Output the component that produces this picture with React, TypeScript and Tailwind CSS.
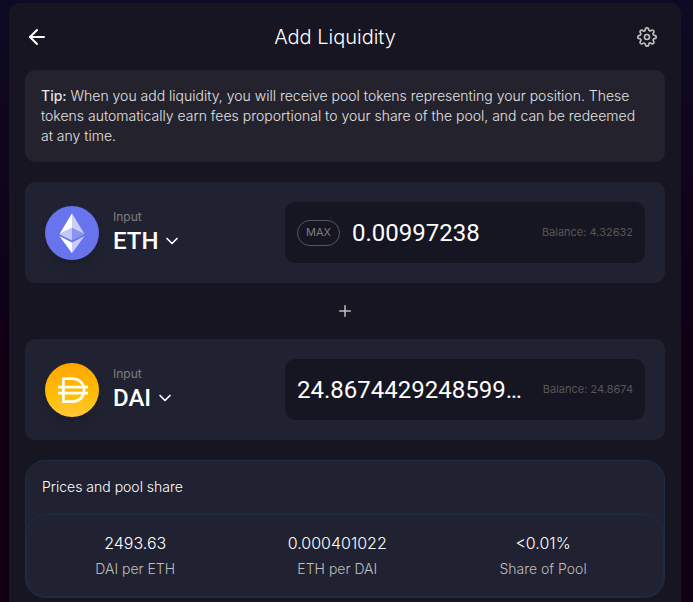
import React, { useState } from 'react';
import { FiArrowLeft, FiChevronDown, FiPlus, FiSettings } from 'react-icons/fi';

const EthLogo: React.FC = () => (
  <svg viewBox="0 0 54 54" className="w-full h-full" aria-hidden="true">
    <circle cx="27" cy="27" r="27" fill="#6873ee" />
    <path d="M27 7.2 L14.4 28.2 L27 22 Z" fill="#fff" />
    <path d="M27 7.2 L39.6 28.2 L27 22 Z" fill="#c9cdfa" />
    <path d="M14.4 28.2 L27 22 V34.6 Z" fill="#c3c7fa" />
    <path d="M39.6 28.2 L27 22 V34.6 Z" fill="#8a93f2" />
    <path d="M14.4 30 L27 36.6 V47.2 Z" fill="#fff" />
    <path d="M39.6 30 L27 36.6 V47.2 Z" fill="#c9cdfa" />
  </svg>
);

const DaiLogo: React.FC = () => (
  <svg viewBox="0 0 54 54" className="w-full h-full" aria-hidden="true">
    <defs>
      <linearGradient id="dai-fill" x1="0" y1="0" x2="0" y2="1">
        <stop offset="0" stopColor="#ffa600" />
        <stop offset="0.6" stopColor="#ffbe05" />
        <stop offset="1" stopColor="#ffc837" />
      </linearGradient>
    </defs>
    <circle cx="27" cy="27" r="27" fill="url(#dai-fill)" />
    <g fill="none" stroke="#fffdf0" strokeWidth="2.8">
      <path d="M18.4 15.7 H26.5 C34.5 15.7 39.2 20.7 39.2 27.2 C39.2 33.7 34.5 38.7 26.5 38.7 H18.4 Z" />
      <path d="M13 24.2 H43 M13 30.2 H43" />
    </g>
  </svg>
);

interface CurrencyPanelProps {
  id: string;
  symbol: string;
  logo: React.ReactNode;
  amount: string;
  balance: string;
  showMax?: boolean;
}

const CurrencyPanel: React.FC<CurrencyPanelProps> = ({ id, symbol, logo, amount, balance, showMax }) => {
  const [value, setValue] = useState(amount);

  return (
    <div className="flex items-center p-5 rounded-[10px] bg-[#202231]">
      <button type="button" className="flex items-center w-2/5 text-left">
        <span className="w-[54px] h-[54px] rounded-full shadow-lg shrink-0">{logo}</span>
        <span className="flex flex-col ml-3.5">
          <span className="text-xs font-normal text-[#7f7f7f]">Input</span>
          <span className="flex items-center text-2xl leading-8 font-medium text-white font-['Roboto',sans-serif]">
            {symbol}
            <FiChevronDown className="w-5 h-5 ml-1" />
          </span>
        </span>
      </button>
      <div className="flex items-center w-3/5 h-[61px] gap-3 px-3 rounded-[10px] bg-[#161522]">
        {showMax && (
          <button
            type="button"
            className="h-[26px] px-2 text-[11px] font-normal text-[#7f7f7f] border border-[#575757] rounded-full shrink-0"
          >
            MAX
          </button>
        )}
        <input
          id={id}
          type="text"
          inputMode="decimal"
          aria-label={`${symbol} amount`}
          value={value}
          onChange={(e) => setValue(e.target.value)}
          className="flex-1 min-w-0 text-2xl font-normal text-white bg-transparent outline-none text-ellipsis font-['Roboto',sans-serif]"
        />
        <span className="text-[11px] font-normal text-[#575757] whitespace-nowrap">Balance: {balance}</span>
      </div>
    </div>
  );
};

const App: React.FC = () => {
  const prices = [
    { value: '2493.63', label: 'DAI per ETH' },
    { value: '0.000401022', label: 'ETH per DAI' },
    { value: '<0.01%', label: 'Share of Pool' },
  ];

  return (
    <div className="min-h-screen pt-[3px] pl-[9px] pr-3 bg-linear-to-b from-[#0d0b24] to-[#0f0014] to-60% font-['Inter',sans-serif] font-light">
      <main className="max-w-2xl mx-auto px-4 pb-1 rounded-t-[10px] bg-[#171521]">
        {/* Header */}
        <header className="flex items-center justify-between h-[67px]">
          <button type="button" aria-label="Back" className="text-white">
            <FiArrowLeft className="w-6 h-6" />
          </button>
          <h1 className="text-xl text-white">Add Liquidity</h1>
          <button type="button" aria-label="Settings" className="pl-4 pr-2 text-[#bfbfbf]">
            <FiSettings className="w-5 h-5" />
          </button>
        </header>

        <p className="p-4 text-sm text-[#e3e3e3] rounded-[10px] bg-[#24222d]">
          <b className="font-medium">Tip:</b> When you add liquidity, you will receive pool tokens representing your
          position. These tokens automatically earn fees proportional to your share of the pool, and can be redeemed at
          any time.
        </p>

        {/* Inputs */}
        <section className="mt-5">
          <CurrencyPanel id="eth" symbol="ETH" logo={<EthLogo />} amount="0.00997238" balance="4.32632" showMax />
          <div className="flex items-center justify-center h-14 text-[#bfbfbf]">
            <FiPlus className="w-[18px] h-[18px]" />
          </div>
          <CurrencyPanel id="dai" symbol="DAI" logo={<DaiLogo />} amount="24.867442924859973" balance="24.8674" />
        </section>

        {/* Prices */}
        <section className="mt-5 border border-[#1e2c42] rounded-[20px] bg-[#202231]">
          <h2 className="px-4 pt-4 pb-[17px] text-sm text-white">Prices and pool share</h2>
          <dl className="flex justify-around pl-3 pr-5 pt-4 pb-[17px] border border-[#1e2c42] rounded-[20px]">
            {prices.map((item) => (
              <div key={item.label} className="flex flex-col-reverse items-center gap-1">
                <dt className="text-sm text-[#bfbfbf]">{item.label}</dt>
                <dd className="text-base text-white">{item.value}</dd>
              </div>
            ))}
          </dl>
        </section>
      </main>
    </div>
  );
};

export default App;
